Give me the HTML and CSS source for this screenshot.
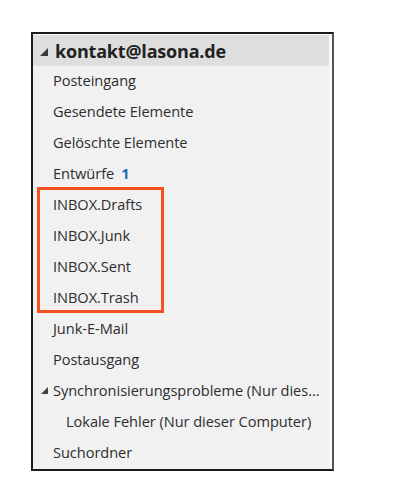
FILE: index.html
```html
<!DOCTYPE html>
<html lang="de">
<head>
<meta charset="utf-8">
<title>Ordner</title>
<link rel="stylesheet" href="styles.css">
</head>
<body>
<div class="panel">
  <div class="inner">
    <div class="header"><span class="tri"></span><span class="account">kontakt@lasona.de</span></div>
    <div class="row">Posteingang</div>
    <div class="row">Gesendete Elemente</div>
    <div class="row">Gelöschte Elemente</div>
    <div class="row">Entwürfe <span class="count">1</span></div>
    <div class="group">
      <div class="row">INBOX.Drafts</div>
      <div class="row">INBOX.Junk</div>
      <div class="row">INBOX.Sent</div>
      <div class="row">INBOX.Trash</div>
      <div class="highlight"></div>
    </div>
    <div class="row">Junk-E-Mail</div>
    <div class="row">Postausgang</div>
    <div class="row sub-head"><span class="tri small"></span>Synchronisierungsprobleme (Nur dies...</div>
    <div class="row nested">Lokale Fehler (Nur dieser Computer)</div>
    <div class="row">Suchordner</div>
  </div>
</div>
</body>
</html>
```

FILE: styles.css
```css
html, body {
  margin: 0;
  padding: 0;
  background: #ffffff;
}
body {
  font-family: "Open Sans", "Noto Sans", sans-serif;
  color: #333333;
}
.panel {
  margin: 32px 0 0 31px;
  width: 299px;
  border-left: 2px solid #1a1a1a;
  border-top: 2px solid #1a1a1a;
  border-right: 2px solid #555555;
  border-bottom: 2px solid #1a1a1a;
  background: #fafafa;
}
.inner {
  margin: 1px 3px 0 0;
  background: #f1f1f1;
}
.header {
  height: 31px;
  background: #dedede;
  display: flex;
  align-items: center;
  padding-left: 7px;
}
.tri {
  width: 0;
  height: 0;
  border-style: solid;
  border-width: 0 0 8px 8px;
  border-color: transparent transparent #3a3a3a transparent;
  margin-right: 7px;
  margin-top: 2px;
}
.tri.small {
  border-width: 0 0 7px 7px;
  border-color: transparent transparent #444 transparent;
  margin-left: -12px;
  margin-right: 5px;
  margin-top: 0;
}
.account {
  font-weight: 700;
  font-size: 18px;
  color: #222222;
  letter-spacing: -0.2px;
}
.row {
  height: 31px;
  box-sizing: border-box;
  display: flex;
  align-items: center;
  padding-left: 20px;
  padding-bottom: 3px;
  font-size: 14.6px;
  letter-spacing: -0.05px;
  white-space: nowrap;
  color: #2e2e2e;
}
.count {
  color: #1f6bb5;
  font-weight: 700;
  margin-left: 7px;
}
.row.nested {
  padding-left: 33px;
}
.group {
  position: relative;
}
.highlight {
  position: absolute;
  left: 4px;
  top: -3px;
  width: 121px;
  height: 120px;
  border: 3px solid #f4511e;
  pointer-events: none;
}
```
